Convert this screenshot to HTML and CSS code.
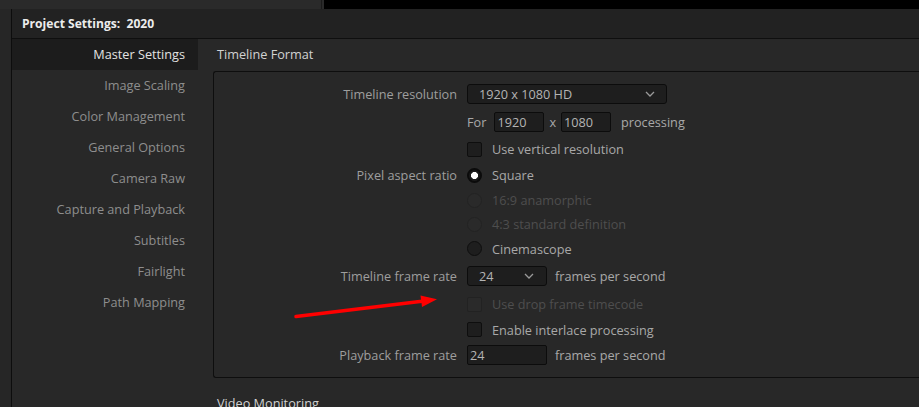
FILE: index.html
```html
<!DOCTYPE html>
<html>
<head>
<meta charset="utf-8">
<link rel="stylesheet" href="styles.css">
</head>
<body>
<div class="backdrop">
  <div class="bd-gray"></div>
  <div class="bd-line"></div>
  <div class="bd-gray2"></div>
  <div class="bd-black"></div>
</div>
<div class="stage">
  <div class="gutter"></div>
  <div class="dialog">
    <div class="titlebar">Project Settings:&nbsp; 2020</div>
    <div class="body">
      <nav class="sidebar">
        <div class="nav-item active">Master Settings</div>
        <div class="nav-item">Image Scaling</div>
        <div class="nav-item">Color Management</div>
        <div class="nav-item">General Options</div>
        <div class="nav-item">Camera Raw</div>
        <div class="nav-item">Capture and Playback</div>
        <div class="nav-item">Subtitles</div>
        <div class="nav-item">Fairlight</div>
        <div class="nav-item">Path Mapping</div>
      </nav>
      <main class="panel">
        <div class="section-title">Timeline Format</div>
        <div class="group">
          <div class="form">
            <div class="lbl">Timeline resolution</div>
            <div class="ctl">
              <div class="select wide"><span>1920 x 1080 HD</span><svg class="chev" width="10" height="6" viewBox="0 0 10 6"><path d="M1 1 L5 5 L9 1" fill="none" stroke="#9a9a9a" stroke-width="1.3"/></svg></div>
            </div>

            <div class="lbl"></div>
            <div class="ctl">
              <span class="txt">For</span>
              <div class="input w50 for-in">1920</div>
              <span class="txt times">x</span>
              <div class="input w50">1080</div>
              <span class="txt proc">processing</span>
            </div>

            <div class="lbl"></div>
            <div class="ctl"><span class="check"></span><span class="txt opt">Use vertical resolution</span></div>

            <div class="lbl">Pixel aspect ratio</div>
            <div class="ctl"><span class="radio on"></span><span class="txt opt">Square</span></div>

            <div class="lbl"></div>
            <div class="ctl"><span class="radio dis"></span><span class="txt opt disabled">16:9 anamorphic</span></div>

            <div class="lbl"></div>
            <div class="ctl"><span class="radio dis"></span><span class="txt opt disabled">4:3 standard definition</span></div>

            <div class="lbl"></div>
            <div class="ctl"><span class="radio"></span><span class="txt opt">Cinemascope</span></div>

            <div class="lbl">Timeline frame rate</div>
            <div class="ctl">
              <div class="select narrow"><span>24</span><svg class="chev" width="10" height="6" viewBox="0 0 10 6"><path d="M1 1 L5 5 L9 1" fill="none" stroke="#9a9a9a" stroke-width="1.3"/></svg></div>
              <span class="txt fps">frames per second</span>
            </div>

            <div class="lbl"></div>
            <div class="ctl"><span class="check dis"></span><span class="txt opt disabled">Use drop frame timecode</span></div>

            <div class="lbl"></div>
            <div class="ctl"><span class="check"></span><span class="txt opt">Enable interlace processing</span></div>

            <div class="lbl">Playback frame rate</div>
            <div class="ctl">
              <div class="input w80">24</div>
              <span class="txt fps">frames per second</span>
            </div>
          </div>
        </div>
        <div class="section-title second">Video Monitoring</div>
      </main>
    </div>
  </div>
</div>
<svg class="annot" width="919" height="407" viewBox="0 0 919 407">
  <line x1="296" y1="316.5" x2="424" y2="301" stroke="#ff0000" stroke-width="3.5" stroke-linecap="round"/>
  <polygon points="437,299.3 420.5,295.5 422,307" fill="#ff0000"/>
</svg>
</body>
</html>
```

FILE: styles.css
```css
* { box-sizing: border-box; }
html, body {
  margin: 0;
  padding: 0;
  width: 919px;
  height: 407px;
  overflow: hidden;
  background: #262626;
  font-family: "Open Sans", "Noto Sans", sans-serif;
  font-size: 12.7px;
}
.backdrop {
  display: flex;
  height: 9px;
}
.bd-gray { width: 321px; background: #2a2a2a; }
.bd-line { width: 1px; background: #1a1a1a; }
.bd-gray2 { width: 2px; background: #2a2a2a; }
.bd-black { flex: 1; background: #000; }

.stage {
  display: flex;
  height: 398px;
}
.gutter {
  width: 11px;
  flex: none;
  background: #262626;
}
.dialog {
  flex: none;
  width: 1000px;
  border-left: 1px solid #0d0d0d;
  display: flex;
  flex-direction: column;
}
.titlebar {
  height: 30px;
  background: #222222;
  border-bottom: 1px solid #0f0f0f;
  color: #ececec;
  font-weight: 700;
  font-size: 12.1px;
  padding-left: 10px;
  line-height: 29px;
}
.body {
  display: flex;
  flex: 1;
  background: #282828;
}
.sidebar {
  width: 186px;
  flex: none;
  background: #282828;
}
.nav-item {
  height: 31px;
  line-height: 31px;
  text-align: right;
  padding-right: 13px;
  color: #8e8e8e;
}
.nav-item.active {
  background: #1c1c1c;
  color: #e2e2e2;
}
.panel {
  flex: 1;
  padding-left: 15px;
}
.section-title {
  height: 32px;
  line-height: 31px;
  padding-left: 4px;
  color: #d2d2d2;
}
.section-title.second {
  margin-top: 10px;
}
.group {
  border: 1px solid #0e0e0e;
  border-right: none;
  border-radius: 3px 0 0 3px;
  height: 307px;
  padding-top: 8px;
}
.form {
  display: grid;
  grid-template-columns: 243px 1fr;
  column-gap: 10px;
  grid-template-rows: 28px 28px 26px 26px 24px 24px 25px 30px 26px 25px 26px;
  align-items: center;
}
.lbl {
  text-align: right;
  color: #9e9e9e;
  white-space: nowrap;
}
.ctl {
  display: flex;
  align-items: center;
  color: #a8a8a8;
  white-space: nowrap;
}
.txt { color: #a8a8a8; }
.txt.disabled { color: #4e4e4e; }
.select {
  height: 20px;
  background: #1e1e1e;
  border: 1px solid #0c0c0c;
  border-radius: 3px;
  display: flex;
  align-items: center;
  justify-content: space-between;
  color: #b4b4b4;
  padding: 0 11px 0 11px;
}
.select.wide { width: 200px; }
.select.narrow { width: 80px; padding-right: 12px; }
.chev { display: block; }
.input {
  height: 20px;
  background: #1e1e1e;
  border: 1px solid #0c0c0c;
  border-radius: 2px;
  color: #b4b4b4;
  padding-left: 2px;
  line-height: 18px;
}
.w50 { width: 50px; }
.w80 { width: 80px; }
.for-in { margin-left: 8px; }
.times { margin: 0 5px; }
.proc { margin-left: 10px; }
.fps { margin-left: 8px; }
.opt { margin-left: 10px; }
.check {
  width: 15px;
  height: 15px;
  flex: none;
  background: #1e1e1e;
  border: 1px solid #0e0e0e;
  border-radius: 2px;
}
.check.dis {
  background: #2a2a2a;
  border-color: #222;
}
.radio {
  width: 15px;
  height: 15px;
  flex: none;
  border-radius: 50%;
  background: #1e1e1e;
  border: 1px solid #0e0e0e;
}
.radio.on {
  border: 2px solid #0b0b0b;
  background: radial-gradient(circle, #ffffff 0 3.2px, #1a1a1a 3.8px);
}
.radio.dis {
  background: #2a2a2a;
  border-color: #232323;
}
.annot {
  position: absolute;
  left: 0;
  top: 0;
  pointer-events: none;
}
```
